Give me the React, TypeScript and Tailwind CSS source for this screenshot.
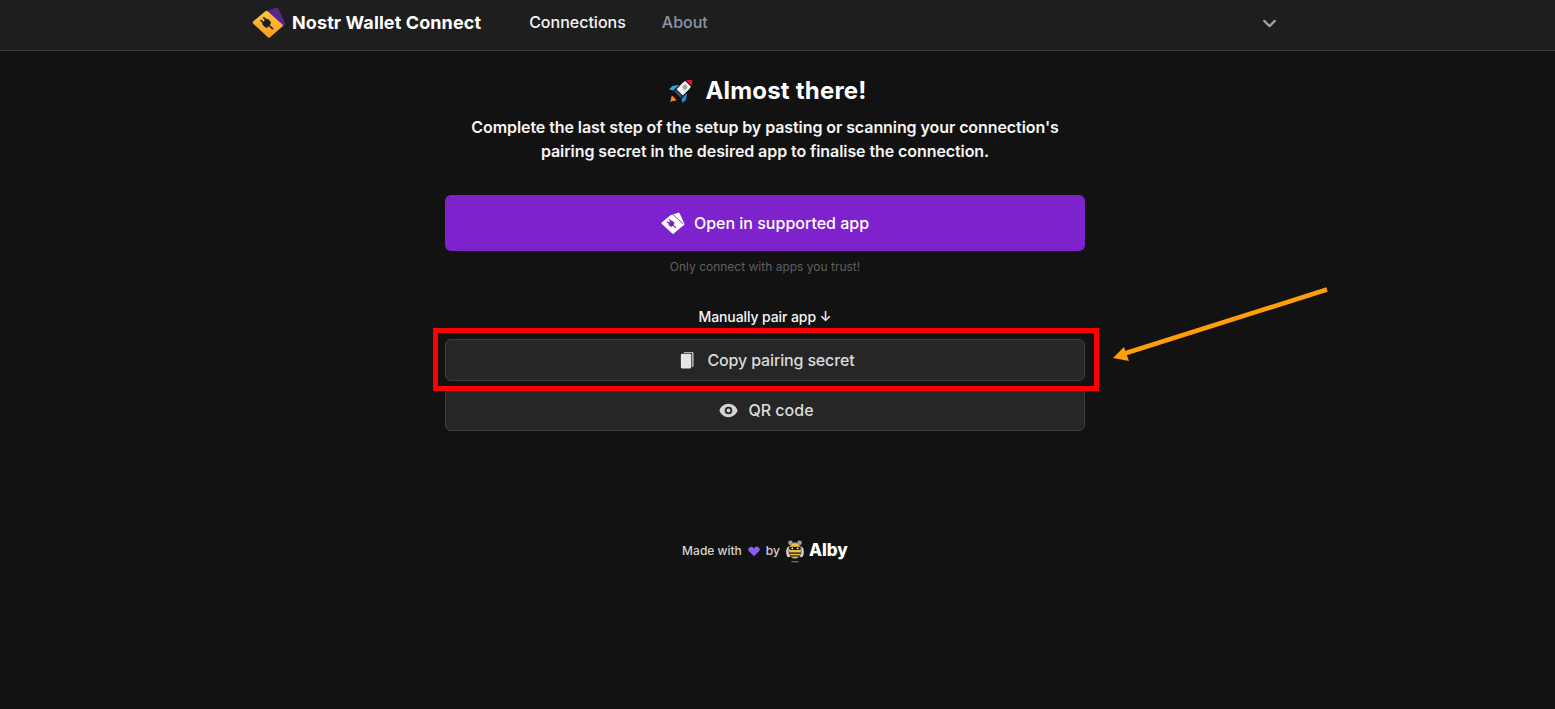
import { ChevronDown } from "lucide-react";

function Logo({ mono = false }: { mono?: boolean }) {
  const back = mono ? "#ffffff" : "#55278a";
  const front = mono ? "#ffffff" : "url(#nwcg)";
  const plug = mono ? "#7e22ce" : "#1e1e1e";
  return (
    <svg viewBox="0 0 34 32" className="w-full h-full">
      {!mono && (
        <defs>
          <linearGradient id="nwcg" x1="0" y1="0" x2="0" y2="1">
            <stop offset="0" stopColor="#fdc63f" />
            <stop offset="1" stopColor="#f99d1c" />
          </linearGradient>
        </defs>
      )}
      <path d="M15 4 L24 0.8 Q25.8 0.4 26.6 2 L33 16 Q33.6 17.8 32 18.8 L28 21 Z" fill={back} />
      <polygon points="2.5,15.5 14.5,5.5 29,18.5 17,29" fill={front} stroke={front} strokeWidth="3.4" strokeLinejoin="round" />
      {mono && <line x1="17" y1="3.4" x2="31.5" y2="16.5" stroke={plug} strokeWidth="1.2" />}
      <g transform="rotate(-47 15.5 17)" fill={plug}>
        <rect x="11.5" y="12.4" width="8" height="7" rx="2.6" />
        <rect x="12.7" y="9.4" width="1.7" height="3.6" />
        <rect x="16.6" y="9.4" width="1.7" height="3.6" />
        <rect x="14.7" y="18.5" width="1.6" height="6" />
      </g>
    </svg>
  );
}

function Rocket() {
  return (
    <svg viewBox="0 0 26 26" className="w-[26px] h-[26px] mr-[11px]">
      <path d="M1.5 24.5 L3.5 16.5 L9.5 22.5 Z" fill="#f7821b" stroke="#111" strokeWidth="1" />
      <g transform="rotate(45 13 13)" stroke="#111" strokeWidth="1">
        <path d="M8 8 L2.8 15.5 V21 L8 18.5 Z" fill="#2fa8e8" />
        <path d="M18 8 L23.2 15.5 V21 L18 18.5 Z" fill="#1f8fd0" />
        <path d="M13 -3.5 C16.5 -0.5 18 2.5 18 6 V18.5 H8 V6 C8 2.5 9.5 -0.5 13 -3.5 Z" fill="#eef2f5" />
        <path d="M13 -3.5 C15.4 -1.5 16.8 0.4 17.5 2.4 H8.5 C9.2 0.4 10.6 -1.5 13 -3.5 Z" fill="#e3122d" />
        <rect x="8" y="15.5" width="10" height="3" fill="#4b5563" />
        <circle cx="13" cy="7.5" r="2.4" fill="#a3a3a3" stroke="none" />
      </g>
    </svg>
  );
}

function Bee() {
  return (
    <svg viewBox="0 0 20 26" className="w-[18px] h-[25px]">
      <circle cx="5" cy="3.4" r="2.6" fill="#9ca3af" />
      <circle cx="15" cy="3.4" r="2.6" fill="#9ca3af" />
      <ellipse cx="3" cy="13.5" rx="2.8" ry="6" fill="#d4d4d4" />
      <ellipse cx="17" cy="13.5" rx="2.8" ry="6" fill="#d4d4d4" />
      <ellipse cx="10" cy="12" rx="7" ry="9" fill="#f0c23c" stroke="#525252" strokeWidth="0.8" />
      <rect x="3.6" y="7.6" width="12.8" height="3.8" rx="1.9" fill="#171717" />
      <circle cx="7" cy="9.5" r="1" fill="#ffffff" />
      <circle cx="13" cy="9.5" r="1" fill="#ffffff" />
      <rect x="3.4" y="14" width="13.2" height="1.6" fill="#262626" />
      <rect x="4.8" y="17.2" width="10.4" height="1.5" fill="#262626" />
      <rect x="6" y="23.6" width="8" height="1.4" fill="#737373" />
    </svg>
  );
}

export default function App() {
  return (
    <div className="relative min-h-[709px] bg-[#121212] font-['Inter',sans-serif] text-white overflow-hidden">
      <header className="h-[51px] bg-[#1e1e1e] border-b border-[#3d3d3d] w-full">
        <div className="w-[1530px] h-[46px] flex justify-center">
          <div className="w-[1040px] pl-[7px] flex items-center">
            <div className="w-[34px] h-[32px] shrink-0">
              <Logo />
            </div>
            <span className="ml-[6px] mb-[2px] font-bold text-[18px] tracking-[0.1px] whitespace-nowrap">Nostr Wallet Connect</span>
            <nav className="ml-[48px] mb-[2px] flex items-center gap-[36px] text-[16px] font-medium">
              <span className="text-[#f5f5f5]">Connections</span>
              <span className="text-[#8b95a5]">About</span>
            </nav>
            <ChevronDown className="ml-auto mr-[5px] w-[21px] h-[21px] text-[#a3a3a3]" strokeWidth={2.5} />
          </div>
        </div>
      </header>

      <main className="w-[1530px] flex flex-col items-center">
        <h1 className="mt-[24px] h-[32px] pl-[5px] flex items-center text-[24px] font-bold leading-[32px] tracking-[0.2px] whitespace-nowrap">
          <Rocket />
          Almost there!
        </h1>
        <p className="mt-[8px] text-[16px] leading-[24px] font-semibold tracking-[-0.08px] text-center text-[#f5f5f5] w-[640px]">
          Complete the last step of the setup by pasting or scanning your connection's
          <br />
          pairing secret in the desired app to finalise the connection.
        </p>

        <button className="mt-[32px] w-[640px] h-[56px] rounded-[6px] bg-[#7e22ce] flex items-center justify-center gap-[9px] text-[16px] font-medium text-white">
          <span className="w-[24px] h-[23px] block">
            <Logo mono />
          </span>
          Open in supported app
        </button>
        <p className="mt-[8px] text-[12px] leading-[16px] text-[#5f5f5f]">Only connect with apps you trust!</p>

        <p className="mt-[32px] text-[14px] leading-[20px] font-medium tracking-[-0.1px] text-[#f5f5f5]">Manually pair app ↓</p>

        <button className="mt-[12px] w-[640px] h-[42px] pl-[4px] rounded-[6px] bg-[#262626] border border-[#404040] flex items-center justify-center gap-[14px] text-[16px] font-medium tracking-[-0.15px] text-[#dcdcdc]">
          <svg viewBox="0 0 14 18" className="w-[14px] h-[17px]">
            <path d="M3.5 1 Q3.5 0.3 4.3 0.3 H13 Q13.8 0.3 13.8 1 V15 Q13.8 15.8 13 15.8 H12.6 V2.2 Q12.6 1 11.4 1 Z" fill="#e5e5e5" />
            <rect x="0.5" y="1.8" width="11" height="15.6" rx="1.4" fill="#e5e5e5" />
          </svg>
          Copy pairing secret
        </button>
        <button className="mt-[8px] w-[640px] h-[42px] pl-[3px] rounded-[6px] bg-[#262626] border border-[#404040] flex items-center justify-center gap-[10px] text-[16px] font-medium text-[#dcdcdc]">
          <svg viewBox="0 0 20 20" className="w-[19px] h-[19px]" fill="#d4d4d4">
            <path d="M10 12a2 2 0 100-4 2 2 0 000 4z" />
            <path fillRule="evenodd" clipRule="evenodd" d="M.458 10C1.732 5.943 5.522 3 10 3s8.268 2.943 9.542 7c-1.274 4.057-5.064 7-9.542 7S1.732 14.057.458 10zM14 10a4 4 0 11-8 0 4 4 0 018 0z" />
          </svg>
          QR code
        </button>

        <footer className="mt-[106px] h-[28px] flex items-center text-[12px] font-medium text-[#d4d4d4]">
          <span>Made with</span>
          <svg viewBox="0 0 20 20" className="ml-[5px] w-[14px] h-[14px]" fill="#8b5cf6">
            <path d="M3.172 5.172a4 4 0 015.656 0L10 6.343l1.172-1.171a4 4 0 115.656 5.656L10 17.657l-6.828-6.829a4 4 0 010-5.656z" />
          </svg>
          <span className="ml-[5px]">by</span>
          <span className="ml-[6px] block">
            <Bee />
          </span>
          <span className="ml-[5px] text-[17px] font-extrabold text-white">Alby</span>
        </footer>
      </main>

      <div className="absolute left-[433px] top-[328px] w-[666px] h-[63px] border-[5px] border-[#ff0000] pointer-events-none" />
      <svg className="absolute left-[1100px] top-[280px] pointer-events-none" width="240" height="90" viewBox="1100 280 240 90">
        <line x1="1327" y1="289.5" x2="1123" y2="354" stroke="#ff9d0a" strokeWidth="4.5" />
        <polygon points="1113,358 1124,347 1129,361" fill="#ff9d0a" />
      </svg>
    </div>
  );
}
